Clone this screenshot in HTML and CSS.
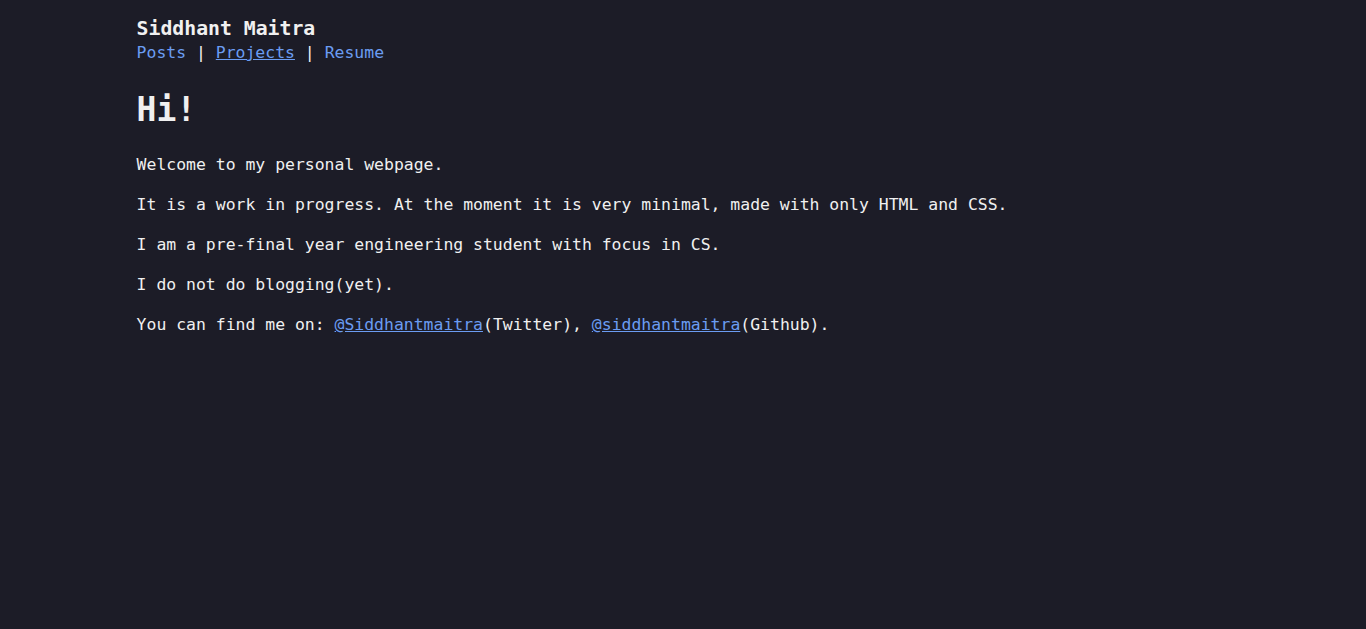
FILE: index.html
```html
<!DOCTYPE html>
<html lang="en">
<head>
<meta charset="utf-8">
<title>Siddhant Maitra</title>
<link rel="stylesheet" href="styles.css">
</head>
<body>
<div class="page">
  <header class="site-header">
    <div class="site-name">Siddhant Maitra</div>
    <nav class="site-nav"><a class="nav-link" href="#">Posts</a> | <a class="nav-link current" href="#">Projects</a> | <a class="nav-link" href="#">Resume</a></nav>
  </header>
  <main class="content">
    <h1 class="title">Hi!</h1>
    <p class="para">Welcome to my personal webpage.</p>
    <p class="para">It is a work in progress. At the moment it is very minimal, made with only HTML and CSS.</p>
    <p class="para">I am a pre-final year engineering student with focus in CS.</p>
    <p class="para">I do not do blogging(yet).</p>
    <p class="para">You can find me on: <a class="link" href="#">@Siddhantmaitra</a>(Twitter), <a class="link" href="#">@siddhantmaitra</a>(Github).</p>
  </main>
</div>
</body>
</html>
```
FILE: styles.css
```css
html, body {
  margin: 0;
  padding: 0;
  background: #1c1c27;
  color: #f0f0f0;
  font-family: "DejaVu Sans Mono", "Liberation Mono", monospace;
  font-size: 16.45px;
}
.page {
  margin: 0 10%;
  padding-top: 17px;
}
.site-name {
  font-weight: bold;
  font-size: 19.8px;
  line-height: 24px;
}
.site-nav {
  line-height: 24px;
}
.nav-link {
  color: #6b9cf2;
  text-decoration: none;
}
.nav-link.current {
  text-decoration: underline;
}
.title {
  font-size: 33px;
  line-height: 40px;
  margin: 25px 0 24px;
}
.para {
  margin: 18px 0;
  line-height: 22px;
}
.link {
  color: #6b9cf2;
}
```
